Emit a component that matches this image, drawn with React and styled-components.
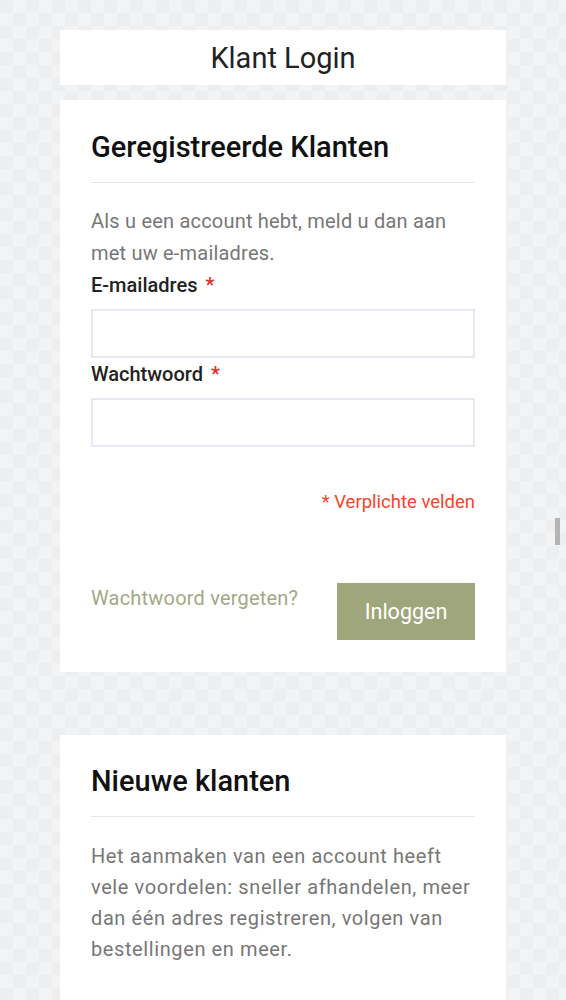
import styled, { createGlobalStyle } from 'styled-components';

const GlobalStyle = createGlobalStyle`
  html, body {
    margin: 0;
    padding: 0;
    height: 1000px;
    overflow: hidden;
  }
  body {
    font-family: Roboto, "Liberation Sans", Arial, sans-serif;
    background-color: #eff0f2;
    background-image: conic-gradient(#f2f3f5 25%, #edeef0 0 50%, #f2f3f5 0 75%, #edeef0 0);
    background-size: 26px 26px;
  }
`;

const Page = styled.div`
  width: 446px;
  margin: 0 auto;
  padding: 30px 0 0;
`;

const TitleBar = styled.div`
  background: #fff;
  height: 55px;
  display: flex;
  align-items: center;
  justify-content: center;
  margin-bottom: 15px;

  h1 {
    margin: 0;
    font-size: 29px;
    font-weight: 400;
    color: #222;
  }
`;

const Card = styled.section`
  background: #fff;
  padding: ${p => p.$pad || '30px 31px 32px'};
  margin-bottom: ${p => p.$gap || '0'};
`;

const CardTitle = styled.h2`
  margin: 0;
  font-size: 29px;
  line-height: 34px;
  font-weight: 500;
  color: #111;
  padding-bottom: 18px;
  border-bottom: 1px solid #e6e6e6;
`;

const Intro = styled.p`
  margin: 22px 0 0;
  font-size: 20px;
  line-height: 32px;
  letter-spacing: 0.2px;
  color: #777;
`;

const Label = styled.label`
  display: block;
  font-size: 20px;
  font-weight: 500;
  color: #222;
  margin-top: 4px;
  line-height: 24px;

  span {
    color: #e02b27;
    margin-left: 8px;
  }
`;

const Input = styled.input`
  display: block;
  box-sizing: border-box;
  width: 100%;
  height: 49px;
  margin-top: 12px;
  border: 2px solid #e6e9f2;
  background: #fff;
  outline: none;
  font-size: 16px;
`;

const Required = styled.p`
  margin: 44px 0 0;
  text-align: right;
  font-size: 18.5px;
  line-height: 22px;
  color: #f4452a;
`;

const Actions = styled.div`
  display: flex;
  justify-content: space-between;
  align-items: flex-start;
  margin-top: 70px;
`;

const Forgot = styled.a`
  font-size: 20px;
  line-height: 24px;
  letter-spacing: 0.2px;
  color: #a3a886;
  text-decoration: none;
  margin-top: 3px;
`;

const LoginButton = styled.button`
  width: 138px;
  height: 57px;
  border: none;
  background: #a0a67c;
  color: #fff;
  font-family: inherit;
  font-size: 21.5px;
  font-weight: 400;
  cursor: pointer;
`;

const Text = styled.p`
  margin: 24px 0 0;
  font-size: 20px;
  line-height: 31px;
  letter-spacing: 0.6px;
  color: #777;
`;

const ScrollThumb = styled.div`
  position: fixed;
  right: 6px;
  top: 518px;
  width: 5px;
  height: 27px;
  background: #b4b4b4;
`;

const App = () => {
  return (
    <>
      <GlobalStyle />
      <Page>
        <TitleBar>
          <h1>Klant Login</h1>
        </TitleBar>
        <Card $gap="63px">
          <CardTitle>Geregistreerde Klanten</CardTitle>
          <Intro>Als u een account hebt, meld u dan aan met uw e-mailadres.</Intro>
          <Label>E-mailadres<span>*</span></Label>
          <Input type="email" />
          <Label>Wachtwoord<span>*</span></Label>
          <Input type="password" />
          <Required>* Verplichte velden</Required>
          <Actions>
            <Forgot href="#">Wachtwoord vergeten?</Forgot>
            <LoginButton>Inloggen</LoginButton>
          </Actions>
        </Card>
        <Card $pad="29px 31px 40px">
          <CardTitle>Nieuwe klanten</CardTitle>
          <Text>
            Het aanmaken van een account heeft vele voordelen: sneller afhandelen, meer dan één adres registreren, volgen van bestellingen en meer.
          </Text>
        </Card>
      </Page>
      <ScrollThumb />
    </>
  );
};

export default App;
